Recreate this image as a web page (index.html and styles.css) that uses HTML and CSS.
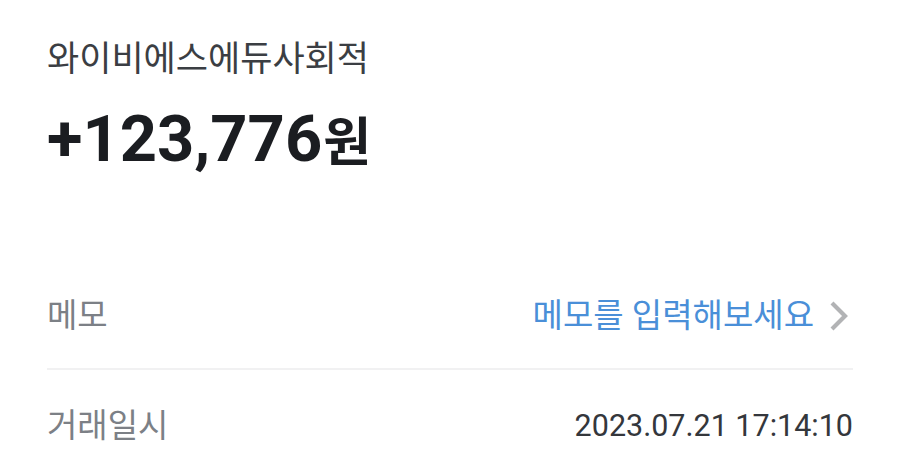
FILE: index.html
```html
<!DOCTYPE html>
<html lang="ko">
<head>
<meta charset="utf-8">
<link rel="stylesheet" href="styles.css">
</head>
<body>
<main class="page">
  <header class="summary">
    <div class="merchant">와이비에스에듀사회적</div>
    <div class="amount">+123,776<span class="won">원</span></div>
  </header>
  <section class="details">
    <div class="row">
      <span class="label">메모</span>
      <span class="memo-link">메모를 입력해보세요
        <svg class="chevron" width="22" height="32" viewBox="0 0 22 32"><path d="M4 3 L17 16 L4 29" fill="none" stroke="#b2b3b5" stroke-width="4.2"/></svg>
      </span>
    </div>
    <div class="divider"></div>
    <div class="row">
      <span class="label">거래일시</span>
      <span class="value">2023.07.21 17:14:10</span>
    </div>
  </section>
</main>
</body>
</html>
```
FILE: styles.css
```css
html, body {
  margin: 0;
  padding: 0;
  background: #ffffff;
}
body {
  font-family: Roboto, "Noto Sans CJK KR", sans-serif;
}
.page {
  padding: 40px 47px 0;
}
.summary {
  display: flex;
  flex-direction: column;
  gap: 23px;
}
.merchant {
  font-size: 35px;
  line-height: 40px;
  color: #3b3e43;
}
.amount {
  font-size: 65px;
  line-height: 72px;
  font-weight: 700;
  color: #1b1d21;
}
.won {
  font-size: 52px;
  margin-left: 1px;
}
.details {
  margin-top: 96px;
}
.row {
  display: flex;
  justify-content: space-between;
  align-items: center;
  padding: 20px 0;
  font-size: 33px;
  line-height: 40px;
}
.label {
  color: #7c8086;
}
.memo-link {
  display: flex;
  align-items: center;
  gap: 14px;
  color: #4a8fd8;
}
.chevron {
  display: block;
  margin-right: 3px;
}
.value {
  color: #34373c;
  font-size: 30.5px;
}
.divider {
  height: 2px;
  background: #f1f1f2;
  margin: 12px 0 16px;
}
```
